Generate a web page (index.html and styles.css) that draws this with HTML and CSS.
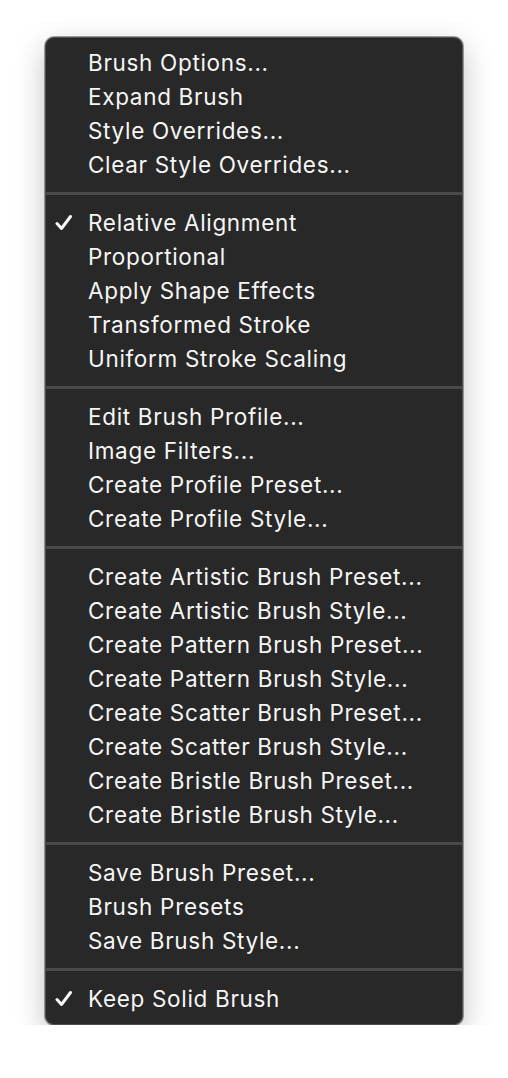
FILE: index.html
```html
<!DOCTYPE html>
<html>
<head>
<meta charset="utf-8">
<link rel="stylesheet" href="styles.css">
</head>
<body>
<div class="menu">
  <div class="group">
    <div class="item">Brush Options...</div>
    <div class="item">Expand Brush</div>
    <div class="item">Style Overrides...</div>
    <div class="item">Clear Style Overrides...</div>
  </div>
  <div class="sep"></div>
  <div class="group">
    <div class="item checked"><svg class="check" viewBox="0 0 18 18"><polyline points="2,9.5 6.5,14.5 15.5,2.5"/></svg>Relative Alignment</div>
    <div class="item">Proportional</div>
    <div class="item">Apply Shape Effects</div>
    <div class="item">Transformed Stroke</div>
    <div class="item">Uniform Stroke Scaling</div>
  </div>
  <div class="sep"></div>
  <div class="group">
    <div class="item">Edit Brush Profile...</div>
    <div class="item">Image Filters...</div>
    <div class="item">Create Profile Preset...</div>
    <div class="item">Create Profile Style...</div>
  </div>
  <div class="sep"></div>
  <div class="group">
    <div class="item">Create Artistic Brush Preset...</div>
    <div class="item">Create Artistic Brush Style...</div>
    <div class="item">Create Pattern Brush Preset...</div>
    <div class="item">Create Pattern Brush Style...</div>
    <div class="item">Create Scatter Brush Preset...</div>
    <div class="item">Create Scatter Brush Style...</div>
    <div class="item">Create Bristle Brush Preset...</div>
    <div class="item">Create Bristle Brush Style...</div>
  </div>
  <div class="sep"></div>
  <div class="group">
    <div class="item">Save Brush Preset...</div>
    <div class="item">Brush Presets</div>
    <div class="item">Save Brush Style...</div>
  </div>
  <div class="sep"></div>
  <div class="group">
    <div class="item checked"><svg class="check" viewBox="0 0 18 18"><polyline points="2,9.5 6.5,14.5 15.5,2.5"/></svg>Keep Solid Brush</div>
  </div>
</div>
</body>
</html>
```

FILE: styles.css
```css
html, body {
  margin: 0;
  padding: 0;
  background: #ffffff;
}
body {
  padding: 37px 0 0 45px;
  font-family: Inter, "Liberation Sans", sans-serif;
}
.menu {
  box-sizing: border-box;
  width: 418px;
  background: #282828;
  border: 1px solid #4f4f4f;
  border-radius: 9px;
  box-shadow: 0 0 0 1px rgba(0,0,0,0.35), 0 10px 30px rgba(0,0,0,0.25);
  padding: 8px 0;
  display: flex;
  flex-direction: column;
}
.group {
  display: flex;
  flex-direction: column;
}
.item {
  position: relative;
  height: 34px;
  line-height: 34px;
  padding-left: 42px;
  font-size: 22.5px;
  letter-spacing: 0.68px;
  color: #f6f6f6;
  white-space: nowrap;
}
.check {
  position: absolute;
  left: 9px;
  top: 8px;
  width: 18px;
  height: 18px;
  fill: none;
  stroke: #f6f6f6;
  stroke-width: 3;
  stroke-linecap: round;
  stroke-linejoin: round;
}
.sep {
  height: 3px;
  background: #4a4a4a;
  margin: 10px 0 11px;
}
```
